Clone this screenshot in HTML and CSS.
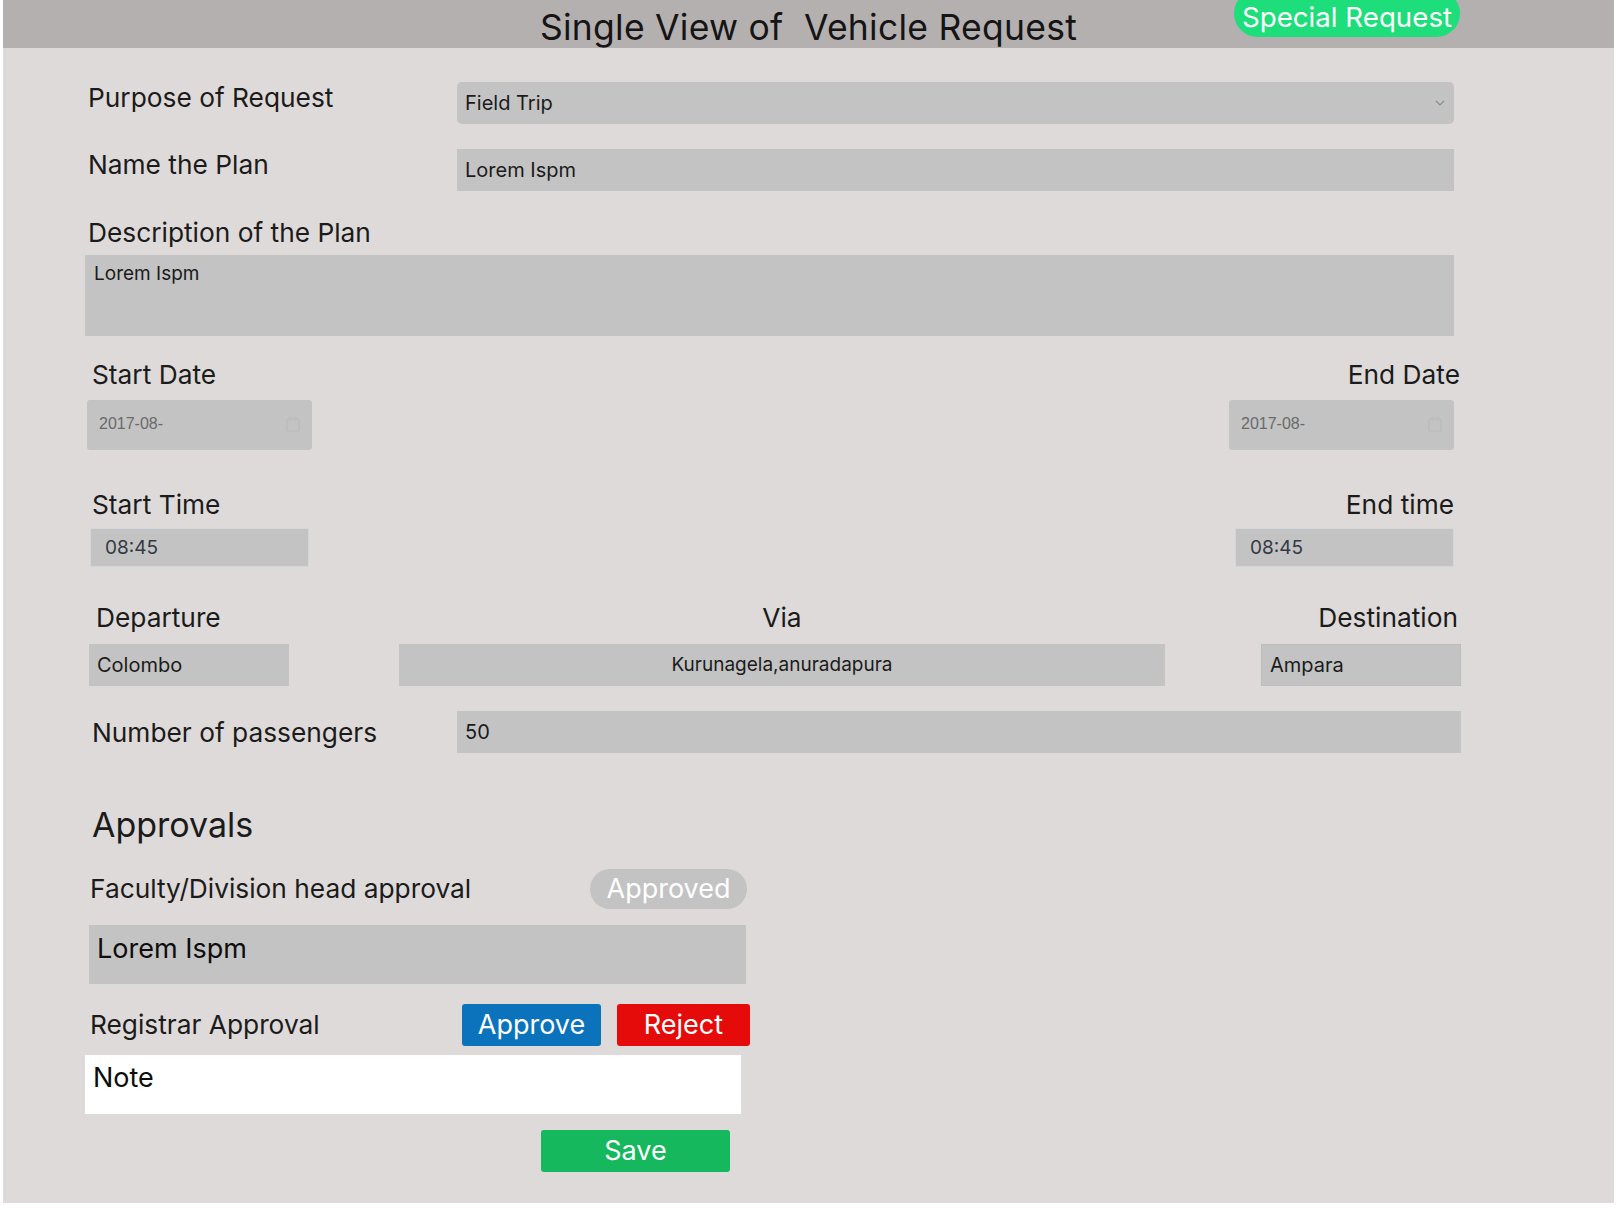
FILE: index.html
```html
<!DOCTYPE html>
<html lang="en">
<head>
<meta charset="utf-8">
<title>Single View of Vehicle Request</title>
<link rel="stylesheet" href="styles.css">
</head>
<body>
<div class="page">
  <header class="header">
    <h1 class="title">Single View of &nbsp;Vehicle Request</h1>
    <span class="badge">Special Request</span>
  </header>

  <main class="form">
    <div class="row row-purpose">
      <label class="label wide">Purpose of Request</label>
      <div class="field select">
        <span>Field Trip</span>
        <svg class="chev" width="10" height="6" viewBox="0 0 10 6"><path d="M1 1l4 4 4-4" fill="none" stroke="#8a8a8a" stroke-width="1.2"/></svg>
      </div>
    </div>

    <div class="row row-name">
      <label class="label wide">Name the Plan</label>
      <div class="field text">Lorem Ispm</div>
    </div>

    <label class="label desc-label">Description of the Plan</label>
    <div class="field textarea">Lorem Ispm</div>

    <div class="pair dates">
      <div class="col">
        <label class="label">Start Date</label>
        <div class="field date"><span>2017-08-</span><svg width="14" height="15" viewBox="0 0 14 15"><rect x="1" y="2" width="12" height="12" rx="1.5" fill="none" stroke="#b9b9b9" stroke-width="1.2"/><path d="M4 0.5v3M10 0.5v3" stroke="#b9b9b9" stroke-width="1.2"/></svg></div>
      </div>
      <div class="col right">
        <label class="label">End Date</label>
        <div class="field date"><span>2017-08-</span><svg width="14" height="15" viewBox="0 0 14 15"><rect x="1" y="2" width="12" height="12" rx="1.5" fill="none" stroke="#b9b9b9" stroke-width="1.2"/><path d="M4 0.5v3M10 0.5v3" stroke="#b9b9b9" stroke-width="1.2"/></svg></div>
      </div>
    </div>

    <div class="pair times">
      <div class="col">
        <label class="label">Start Time</label>
        <div class="field time">08:45</div>
      </div>
      <div class="col right">
        <label class="label">End time</label>
        <div class="field time">08:45</div>
      </div>
    </div>

    <div class="route">
      <div class="col dep">
        <label class="label">Departure</label>
        <div class="field text">Colombo</div>
      </div>
      <div class="col via">
        <label class="label">Via</label>
        <div class="field text centered">Kurunagela,anuradapura</div>
      </div>
      <div class="col dest">
        <label class="label">Destination</label>
        <div class="field text bordered">Ampara</div>
      </div>
    </div>

    <div class="row row-pass">
      <label class="label wide">Number of passengers</label>
      <div class="field text">50</div>
    </div>

    <h2 class="approvals">Approvals</h2>

    <div class="arow faculty">
      <span class="label">Faculty/Division head approval</span>
      <span class="pill">Approved</span>
    </div>
    <div class="big-box">Lorem Ispm</div>

    <div class="arow registrar">
      <span class="label">Registrar Approval</span>
      <div class="btns">
        <button class="btn approve">Approve</button>
        <button class="btn reject">Reject</button>
      </div>
    </div>
    <div class="note">Note</div>

    <div class="save-wrap">
      <button class="btn save">Save</button>
    </div>
  </main>
</div>
</body>
</html>
```

FILE: styles.css
```css
* { box-sizing: border-box; }

html, body {
  margin: 0;
  padding: 0;
  background: #ffffff;
}

body {
  font-family: Inter, "Noto Sans", sans-serif;
  color: #1b1b1b;
}

.page {
  margin: 0 3px;
  background: #dedad9;
  padding-bottom: 31px;
}

.header {
  position: relative;
  height: 48px;
  background: #b5b0b0;
  text-align: center;
}

.title {
  margin: 0;
  font-size: 35.5px;
  font-weight: 400;
  line-height: 55px;
  color: #151515;
  letter-spacing: 0.25px;
}

.badge {
  position: absolute;
  left: 1231px;
  top: -10px;
  width: 226px;
  height: 47px;
  padding-top: 10px;
  border-radius: 24px;
  background: #1edd7b;
  color: #ffffff;
  font-size: 27.7px;
  line-height: 34px;
  text-align: center;
}

.form {
  padding-top: 34px;
}

.label {
  display: block;
  font-size: 26.3px;
  line-height: 32px;
  color: #1b1b1b;
  white-space: nowrap;
}

.field {
  background: #c3c3c3;
  color: #1b1b1b;
  font-size: 20px;
}

/* label + field rows */
.row {
  display: flex;
  align-items: flex-start;
  margin-left: 85px;
}
.row .wide { width: 369px; flex: none; }
.row .field {
  height: 42px;
  line-height: 42px;
  padding-left: 8px;
}

.row-purpose .field { width: 997px; }
.row-name { margin-top: 25px; }
.row-name .field { width: 997px; }

.select {
  position: relative;
  border-radius: 5px;
  display: flex;
  align-items: center;
  justify-content: space-between;
  padding-right: 9px;
}
.select span { line-height: 42px; }

.desc-label {
  margin: 26px 0 0 85px;
}

.textarea {
  margin: 6px 0 0 82px;
  width: 1369px;
  height: 81px;
  padding: 7px 0 0 9px;
  line-height: 24px;
  font-size: 19px;
}

/* two-column pairs */
.pair {
  display: flex;
  justify-content: space-between;
}
.pair .col {
  display: flex;
  flex-direction: column;
  align-items: flex-start;
}
.pair .col.right { align-items: flex-end; }

.dates {
  margin: 23px 0 0 84px;
  width: 1373px;
}
.dates .col .label { padding-left: 5px; }
.dates .col.right .label { padding-left: 0; }
.dates .col.right .field { margin-right: 6px; }
.date {
  margin-top: 9px;
  width: 225px;
  height: 50px;
  border-radius: 3px;
  display: flex;
  align-items: center;
  justify-content: space-between;
  padding: 0 12px 3px 12px;
  font-family: "Liberation Sans", Arial, sans-serif;
  font-size: 16px;
  color: #6a6a6a;
}
.date svg { margin-top: 2px; }

.times {
  margin: 39px 0 0 87px;
  width: 1364px;
}
.times .col .label { padding-left: 2px; }
.times .col.right .label { padding-left: 0; }
.time {
  margin-top: 7px;
  width: 219px;
  height: 39px;
  line-height: 37px;
  padding-left: 14px;
  border: 1px solid #d3d6da;
  border-radius: 2px;
  color: #343a44;
  font-size: 19px;
}

/* route */
.route {
  display: flex;
  margin: 35px 0 0 86px;
  width: 1372px;
}
.route .col {
  display: flex;
  flex-direction: column;
  flex: none;
}
.route .field {
  margin-top: 10px;
  height: 42px;
  line-height: 42px;
  padding-left: 8px;
}
.route .dep { width: 200px; }
.route .dep .label { padding-left: 7px; }
.route .via { width: 766px; margin-left: 110px; }
.route .via .label { text-align: center; }
.route .via .field { font-size: 19px; }
.route .dest { width: 200px; margin-left: 96px; }
.route .dest .label { text-align: right; padding-right: 3px; }
.centered { text-align: center; padding-left: 0 !important; }
.bordered { border: 1px solid #bdbdbd; line-height: 40px !important; }

.row-pass {
  margin-top: 25px;
  margin-left: 89px;
}
.row-pass .label { width: 365px; margin-top: 6px; }
.row-pass .field { width: 1004px; }

/* approvals */
.approvals {
  margin: 52px 0 0 89px;
  font-size: 34px;
  font-weight: 400;
  line-height: 40px;
  color: #1b1b1b;
}

.arow {
  display: flex;
  align-items: center;
  justify-content: space-between;
  margin-left: 87px;
}
.faculty {
  margin-top: 24px;
  width: 657px;
}
.pill {
  width: 157px;
  height: 40px;
  border-radius: 20px;
  background: #c3c3c3;
  color: #ffffff;
  font-size: 27px;
  line-height: 40px;
  text-align: center;
}

.big-box {
  margin: 16px 0 0 86px;
  width: 657px;
  height: 59px;
  background: #c3c3c3;
  padding: 7px 0 0 8px;
  font-size: 27px;
  line-height: 34px;
  color: #0d0d0d;
}

.registrar {
  margin-top: 20px;
  width: 660px;
}
.btns {
  display: flex;
  gap: 16px;
}
.btn {
  border: 0;
  height: 42px;
  border-radius: 3px;
  color: #ffffff;
  font-family: Inter, "Noto Sans", sans-serif;
  font-size: 27px;
  line-height: 42px;
  padding: 0;
}
.approve { width: 139px; background: #0b73bb; }
.reject { width: 133px; background: #e50b0b; }

.note {
  margin: 9px 0 0 82px;
  width: 656px;
  height: 59px;
  background: #ffffff;
  padding: 6px 0 0 8px;
  font-size: 27px;
  line-height: 34px;
  color: #0d0d0d;
}

.save-wrap {
  margin: 16px 0 0 538px;
}
.save { width: 189px; background: #15b85c; }
```
